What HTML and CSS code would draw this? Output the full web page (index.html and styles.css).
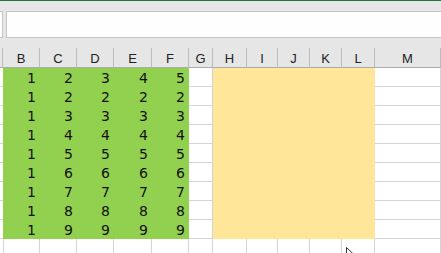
FILE: index.html
```html
<!DOCTYPE html>
<html lang="en">
<head>
  <meta charset="UTF-8" />
  <meta name="viewport" content="width=device-width, initial-scale=1.0"/>
  <title>Sheet</title>
  <link rel="stylesheet" href="styles.css">
</head>
<body>
  <div class="topline"></div>
  <div class="toolbar">
    <div class="namebox"></div>
    <div class="formula"></div>
  </div>
  <div class="sheet" id="sheet"></div>

  <svg class="cursor" width="12" height="18" viewBox="0 0 12 18">
    <path d="M0.5 0.5 L0.5 14 L3.8 10.8 L6.2 16.5 L8.2 15.6 L5.8 10 L10.5 10 Z" fill="#fff" stroke="#333" stroke-width="1"/>
  </svg>

  <script>
    const cols = ['', 'B', 'C', 'D', 'E', 'F', 'G', 'H', 'I', 'J', 'K', 'L', 'M'];
    const data = [
      [1, 2, 3, 4, 5],
      [1, 2, 2, 2, 2],
      [1, 3, 3, 3, 3],
      [1, 4, 4, 4, 4],
      [1, 5, 5, 5, 5],
      [1, 6, 6, 6, 6],
      [1, 7, 7, 7, 7],
      [1, 8, 8, 8, 8],
      [1, 9, 9, 9, 9]
    ];

    function buildSheet() {
      const sheet = document.getElementById('sheet');
      let html = '';

      cols.forEach(c => {
        html += `<div class="head">${c}</div>`;
      });

      for (let r = 0; r < 10; r++) {
        const row = data[r];
        cols.forEach((c, i) => {
          let cls = 'cell';
          let text = '';
          if (i === 0) cls += ' rowhead';
          if (row && i >= 1 && i <= 5) {
            cls += ' green';
            text = row[i - 1];
          }
          if (row && i >= 7 && i <= 11) cls += ' yellow';
          html += `<div class="${cls}">${text}</div>`;
        });
      }
      sheet.innerHTML = html;
    }

    buildSheet();
  </script>
</body>
</html>
```

FILE: styles.css
```css
body {
  margin: 0;
  width: 441px;
  height: 253px;
  overflow: hidden;
  background: #fff;
  font-family: 'Liberation Sans', Arial, sans-serif;
  position: relative;
}
.topline {
  height: 1px;
  background: #217346;
}
.toolbar {
  display: flex;
  background: #e6e6e6;
  padding: 10px 0;
}
.namebox {
  width: 2px;
  height: 25px;
  background: #fff;
  border: 1px solid #c6c6c6;
  border-left: none;
}
.formula {
  flex: 1;
  height: 25px;
  margin-left: 3px;
  background: #fefefe;
  border: 1px solid #c6c6c6;
  border-right: none;
}
.sheet {
  display: grid;
  grid-template-columns: 3px 37px 37px 37px 38px 37px 24px 34px 31px 32px 32px 33px 66px;
  grid-template-rows: 20px repeat(10, 19px);
}
.head {
  box-sizing: border-box;
  background: #e6e6e6;
  border-right: 1px solid #bcbcbc;
  border-bottom: 1px solid #ababab;
  padding-top: 3px;
  line-height: 16px;
  font-size: 13px;
  color: #222;
  text-align: center;
}
.cell {
  box-sizing: border-box;
  border-right: 1px solid #d4d4d4;
  border-bottom: 1px solid #d4d4d4;
  padding: 3px 3px 0 0;
  line-height: 15px;
  font-family: 'DejaVu Sans', sans-serif;
  font-size: 14px;
  color: #111;
  text-align: right;
}
.rowhead {
  background: #fff;
}
.green {
  background: #92d050;
  border-color: #92d050;
}
.yellow {
  background: #ffe699;
  border-color: #ffe699;
}
.cursor {
  position: absolute;
  left: 346px;
  top: 247px;
}
```
